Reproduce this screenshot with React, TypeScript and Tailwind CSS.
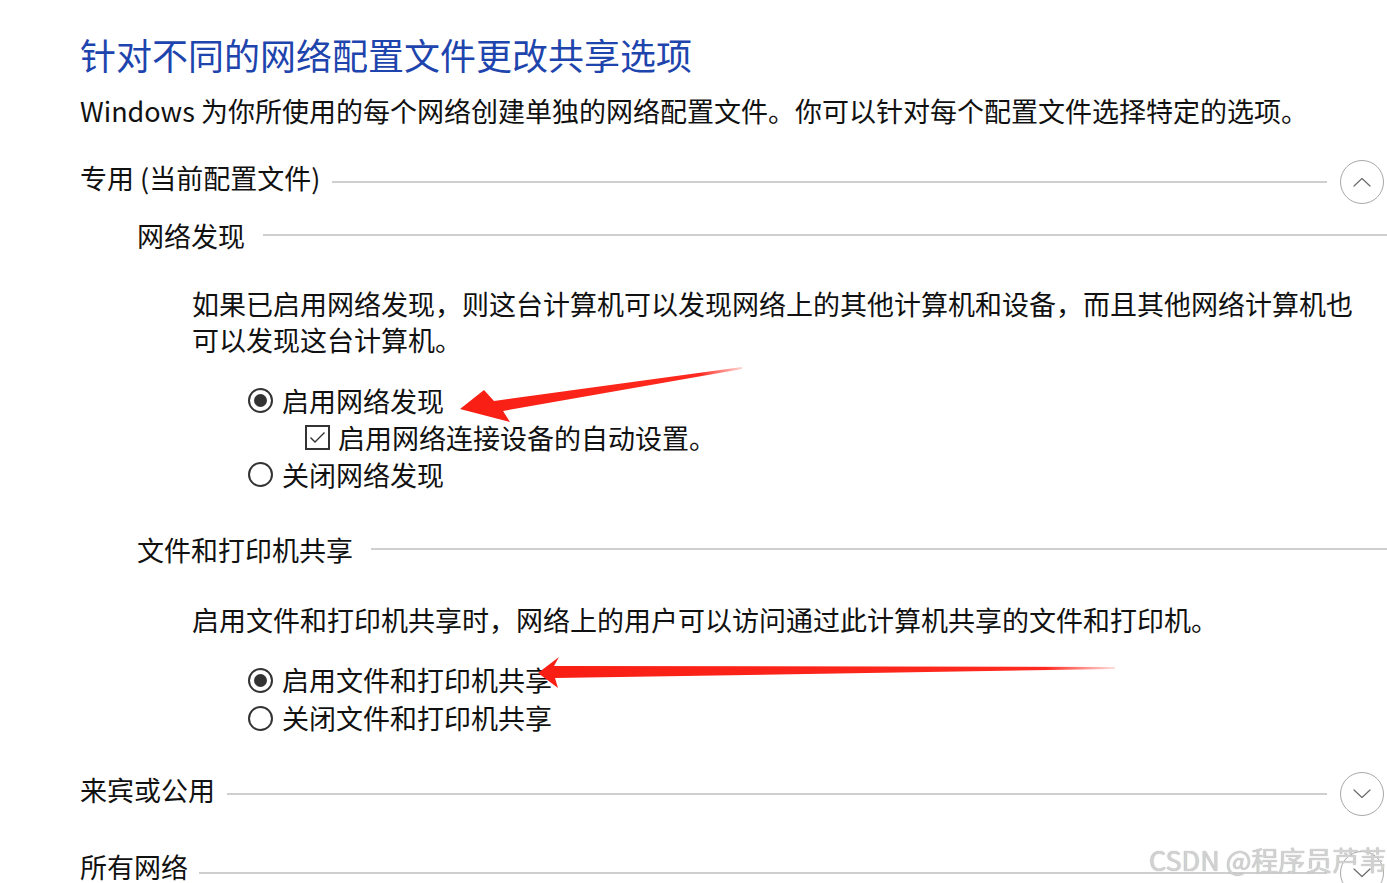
import React from 'react';

const font = "font-['Noto_Sans_CJK_SC','Noto_Sans',sans-serif]";

function CircleButton({ up }: { up?: boolean }) {
  return (
    <div className="w-[44px] h-[44px] shrink-0 rounded-full border border-[#a8a8a8] bg-white flex items-center justify-center">
      <svg width="22" height="12" viewBox="0 0 22 12" fill="none">
        <path
          d={up ? 'M3 10 L11 2.5 L19 10' : 'M3 2 L11 9.5 L19 2'}
          stroke="#6b6b6b"
          strokeWidth="1.2"
          strokeLinecap="round"
          strokeLinejoin="round"
        />
      </svg>
    </div>
  );
}

function MainHeader({ title, up, gap, lineOffset, className, tight }: { title: string; up?: boolean; gap: string; lineOffset: string; className?: string; tight?: boolean }) {
  return (
    <div className={`flex items-center ${tight ? 'h-[28px]' : 'h-[36px]'} pl-[80px] pr-[3px] ${className ?? ''}`}>
      <span className={`text-[27px] ${tight ? 'leading-[28px]' : 'leading-[36px]'} text-[#111] whitespace-nowrap`}>{title}</span>
      <div className={`flex-1 h-[2px] bg-[#cfcfcf] ${gap} ${lineOffset}`} />
      <div className={`ml-[13px] ${lineOffset}`}>
        <CircleButton up={up} />
      </div>
    </div>
  );
}

function SubHeader({ title, className }: { title: string; className?: string }) {
  return (
    <div className={`flex items-center h-[36px] pl-[137px] ${className ?? ''}`}>
      <span className="text-[27px] leading-[36px] text-[#111] whitespace-nowrap">{title}</span>
      <div className="flex-1 h-[2px] bg-[#cfcfcf] ml-[18px] -mt-[2px]" />
    </div>
  );
}

function Radio({ checked, label, h }: { checked?: boolean; label: string; h: string }) {
  return (
    <div className={`flex items-center ${h} pl-[248px]`}>
      <div className="w-[25px] h-[25px] rounded-full border-2 border-[#333] flex items-center justify-center shrink-0">
        {checked && <div className="w-[13px] h-[13px] rounded-full bg-[#333]" />}
      </div>
      <span className="ml-[9px] text-[27px] leading-[36px] text-[#111] whitespace-nowrap">{label}</span>
    </div>
  );
}

function Check({ label }: { label: string }) {
  return (
    <div className="flex items-center h-[37px] pl-[305px]">
      <div className="w-[25px] h-[25px] border-2 border-[#333] flex items-center justify-center shrink-0">
        <svg width="17" height="13" viewBox="0 0 17 13" fill="none">
          <path d="M1.5 6.5 L6 11 L15.5 1.5" stroke="#333" strokeWidth="1.4" />
        </svg>
      </div>
      <span className="ml-[8px] text-[27px] leading-[36px] text-[#111] whitespace-nowrap">{label}</span>
    </div>
  );
}

export default function App() {
  return (
    <div className={`relative w-[1387px] h-[883px] overflow-hidden bg-white ${font}`}>
      <div className="pt-[30px]">
        <div className="pl-[80px] h-[48px] text-[36px] leading-[48px] text-[#1e44ad] whitespace-nowrap">
          针对不同的网络配置文件更改共享选项
        </div>
        <div className="pl-[80px] mt-[15px] h-[36px] text-[27px] leading-[36px] text-[#111] whitespace-nowrap">
          Windows 为你所使用的每个网络创建单独的网络配置文件。你可以针对每个配置文件选择特定的选项。
        </div>

        <MainHeader title="专用 (当前配置文件)" up gap="ml-[12px]" lineOffset="mt-[8px]" className="mt-[31px]" />

        <SubHeader title="网络发现" className="mt-[22px]" />

        <div className="pl-[192px] mt-[32px] text-[27px] leading-[36px] text-[#111] whitespace-nowrap">
          <div>如果已启用网络发现，则这台计算机可以发现网络上的其他计算机和设备，而且其他网络计算机也</div>
          <div>可以发现这台计算机。</div>
        </div>

        <div className="mt-[24px]">
          <Radio checked label="启用网络发现" h="h-[37px]" />
          <Check label="启用网络连接设备的自动设置。" />
          <Radio label="关闭网络发现" h="h-[37px]" />
        </div>

        <SubHeader title="文件和打印机共享" className="mt-[39px]" />

        <div className="pl-[192px] mt-[34px] h-[36px] text-[27px] leading-[36px] text-[#111] whitespace-nowrap">
          启用文件和打印机共享时，网络上的用户可以访问通过此计算机共享的文件和打印机。
        </div>

        <div className="mt-[23px]">
          <Radio checked label="启用文件和打印机共享" h="h-[38px]" />
          <Radio label="关闭文件和打印机共享" h="h-[38px]" />
        </div>

        <MainHeader title="来宾或公用" gap="ml-[12px]" lineOffset="mt-[8px]" className="mt-[35px]" />
        <MainHeader title="所有网络" gap="ml-[11px]" lineOffset="mt-[12px]" className="mt-[45px]" tight />
      </div>

      {/* red annotation arrows */}
      <svg className="absolute inset-0 pointer-events-none" width="1387" height="883" viewBox="0 0 1387 883">
        <defs>
          <linearGradient id="fade1" x1="742" y1="368" x2="460" y2="408" gradientUnits="userSpaceOnUse">
            <stop offset="0" stopColor="#ff2a1f" stopOpacity="0.2" />
            <stop offset="0.15" stopColor="#ff2a1f" />
            <stop offset="1" stopColor="#f81e14" />
          </linearGradient>
          <linearGradient id="fade2" x1="1115" y1="668" x2="538" y2="672" gradientUnits="userSpaceOnUse">
            <stop offset="0" stopColor="#ff2a1f" stopOpacity="0.15" />
            <stop offset="0.12" stopColor="#ff2a1f" />
            <stop offset="1" stopColor="#f81e14" />
          </linearGradient>
        </defs>
        <polygon
          points="742,367 494,401 484,390 460,409 510,422 503,411 742,369"
          fill="url(#fade1)"
        />
        <polygon
          points="1115,667 554,666 559,657 538,673 558,688 555,678 1115,669"
          fill="url(#fade2)"
        />
      </svg>

      {/* watermark */}
      <div className="absolute left-[1149px] top-[842px] text-[27px] leading-[36px] text-[#d2d2d2] whitespace-nowrap [text-shadow:0_0_1px_#a0a0a0]">
        CSDN @程序员芦苇
      </div>
    </div>
  );
}
